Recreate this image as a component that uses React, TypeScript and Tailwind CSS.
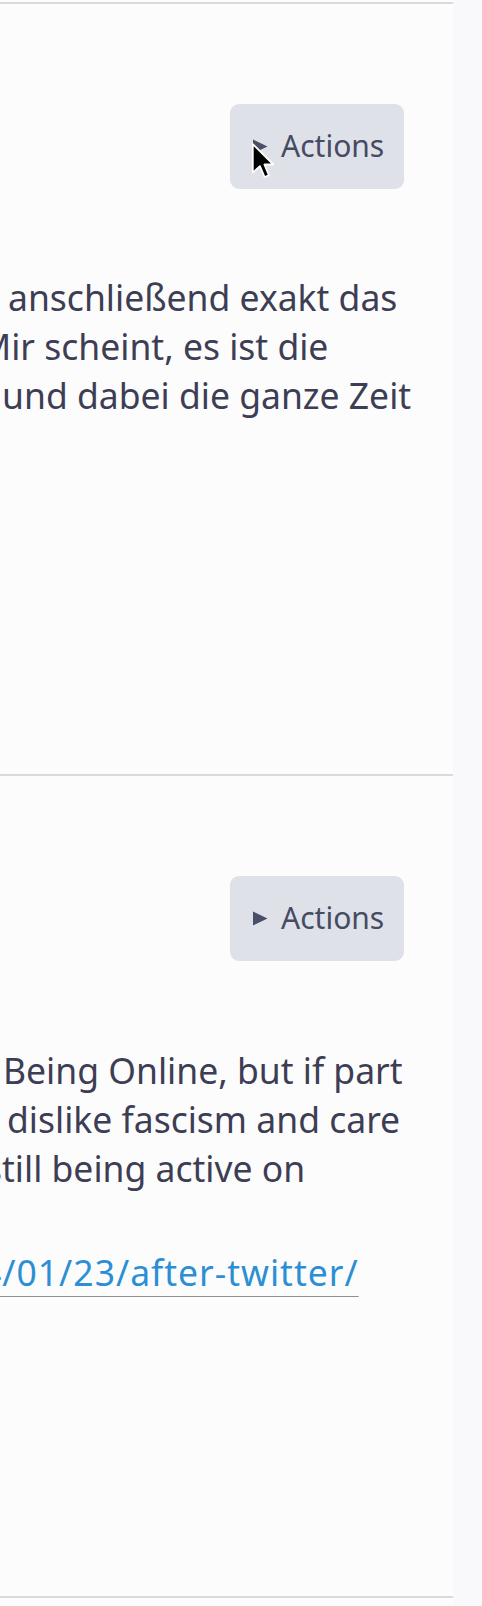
function Triangle() {
  return (
    <svg width="16" height="15" viewBox="0 0 16 15" className="shrink-0">
      <path d="M1 0.5 L15.5 7.5 L1 14.5 Z" fill="#4a4f68" />
    </svg>
  );
}

function Cursor() {
  return (
    <svg
      width="25"
      height="40"
      viewBox="-1 -1 14 22"
      className="absolute left-[251px] top-[142px] pointer-events-none"
    >
      <path
        d="M0 0 L0 16 L4 12.3 L6.6 18.4 L9 17.4 L6.5 11.4 L11.5 11.4 Z"
        fill="#000"
        stroke="#fff"
        strokeWidth="1"
        strokeLinejoin="round"
      />
    </svg>
  );
}

function ActionsButton() {
  return (
    <div className="flex justify-end pr-[49px]">
      <div className="flex items-center gap-[13px] h-[85px] w-[174px] pl-[22px] rounded-[9px] bg-[#dfe1e8] text-[#454b63] text-[30px] leading-none">
        <Triangle />
        <span className="-mt-[2px]">Actions</span>
      </div>
    </div>
  );
}

export default function App() {
  return (
    <div
      className="relative flex w-[482px] h-[1606px] bg-[#fcfcfd] overflow-hidden"
      style={{ fontFamily: '"Noto Sans", "Open Sans", sans-serif' }}
    >
      <div className="w-[453px] shrink-0 overflow-hidden pt-[2px]">
        {/* Card 1 */}
        <div className="border-t-2 border-[#d9d9e0] h-[772px] pt-[100px]">
          <ActionsButton />
          <div className="mt-[84px] text-[35.5px] leading-[49px] text-[#3d3e54] whitespace-nowrap">
            <div className="ml-[8px]">anschließend exakt das</div>
            <div className="ml-[-21px]">Mir scheint, es ist die</div>
            <div className="ml-[2px]">und dabei die ganze Zeit</div>
          </div>
        </div>
        {/* Card 2 */}
        <div className="border-t-2 border-[#d9d9e0] h-[822px] pt-[100px]">
          <ActionsButton />
          <div className="mt-[85px] text-[35.5px] leading-[49px] text-[#3d3e54] whitespace-nowrap">
            <div className="ml-[3px]">Being Online, but if part</div>
            <div className="ml-[7px]">dislike fascism and care</div>
            <div className="ml-[-15px]">still being active on</div>
            <div className="mt-[55px] ml-[-19px]">
              <a
                href="#"
                className="text-[#2c8fd3] tracking-[1px] underline decoration-[#8f8f9c] decoration-1 underline-offset-[10px]"
              >
                4/01/23/after-twitter/
              </a>
            </div>
          </div>
        </div>
        <div className="border-t-2 border-[#d9d9e0]" />
      </div>
      <div className="flex-1 bg-[#f9f9fb]" />
      <Cursor />
    </div>
  );
}
